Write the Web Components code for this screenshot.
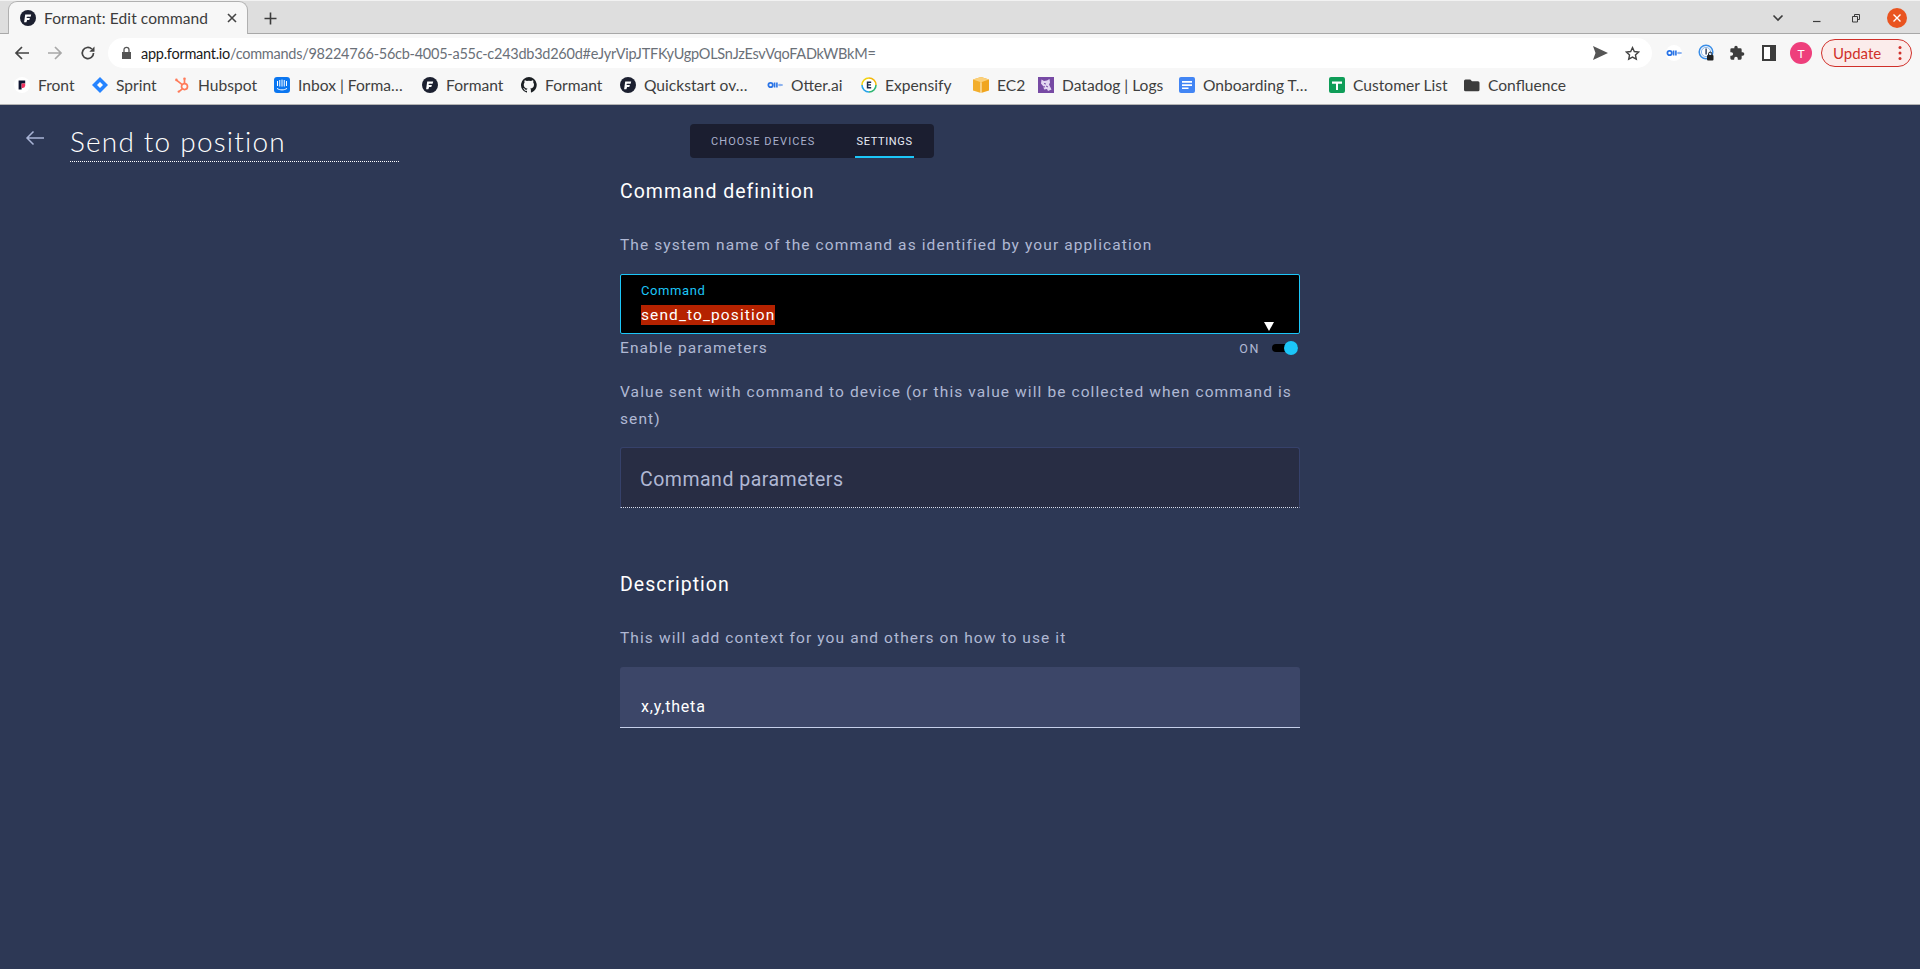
<!DOCTYPE html>
<html>
<head>
<style>
html, body { margin: 0; height: 100%; }
body { background-color: #2d3855; overflow: hidden; display: flex; flex-direction: column; height: 969px; }
form-section.desc { margin-top: 65px; }
</style>
</head>
<body>
<browser-tabs></browser-tabs>
<browser-toolbar></browser-toolbar>
<browser-bookmarks>
  <book-mark icon="front" style="--w:38px">Front</book-mark>
  <book-mark icon="sprint" style="--w:42px">Sprint</book-mark>
  <book-mark icon="hubspot" style="--w:60px">Hubspot</book-mark>
  <book-mark icon="inbox" style="--w:108px">Inbox | Forma…</book-mark>
  <book-mark icon="formant" style="--w:59px">Formant</book-mark>
  <book-mark icon="github" style="--w:59px">Formant</book-mark>
  <book-mark icon="formant" style="--w:107px">Quickstart ov…</book-mark>
  <book-mark icon="otter" style="--w:54px">Otter.ai</book-mark>
  <book-mark icon="expensify" style="--w:72px">Expensify</book-mark>
  <book-mark icon="ec2" style="--w:25px">EC2</book-mark>
  <book-mark icon="datadog" style="--w:101px">Datadog | Logs</book-mark>
  <book-mark icon="docs" style="--w:110px">Onboarding T…</book-mark>
  <book-mark icon="sheets" style="--w:95px">Customer List</book-mark>
  <book-mark icon="folder" style="--w:78px">Confluence</book-mark>
</browser-bookmarks>
<command-page>
  <page-header slot="header" title-text="Send to position"></page-header>
  <form-section heading="Command definition" hint="The system name of the command as identified by your application">
    <command-select label="Command" value="send_to_position"></command-select>
    <param-toggle label="Enable parameters"></param-toggle>
  </form-section>
  <params-block hint="Value sent with command to device (or this value will be collected when command is sent)" label="Command parameters"></params-block>
  <form-section class="desc" heading="Description" hint="This will add context for you and others on how to use it">
    <text-field value="x,y,theta"></text-field>
  </form-section>
</command-page>

<script>
  const UI_FONT = "Lato, 'Noto Sans', sans-serif";
  const APP_FONT = "Roboto, 'Liberation Sans', sans-serif";
  const CYAN = '#1cc6f8';

  const FORMANT_SVG = `<svg viewBox="0 0 16 16" width="16" height="16"><circle cx="8" cy="8" r="8" fill="#1c2030"/><path d="M5.2 4.6h6l-.6 2.1H8.1l-.4 1.4h2.2l-.6 2H7.1L6.4 12.3H4.1z" fill="#fff"/><path d="M6.9 6.7h1.5L7.9 8.1H6.5z" fill="#1c2030"/></svg>`;

  const ICONS = {
    front: `<svg viewBox="0 0 16 16" width="16" height="16"><circle cx="8" cy="8" r="8" fill="#fff"/><path d="M4.6 3.4h6.6v3H7.6v6.2h-3z" fill="#0d1330"/><path d="M7.6 6.4h3.6v2.2a2.4 2.4 0 0 1-2.4 2.4H7.6z" fill="#f2335f"/></svg>`,
    sprint: `<svg viewBox="0 0 16 16" width="16" height="16"><path d="M8 0l8 8-8 8-8-8z" fill="#2684ff"/><path d="M8 5l3 3-3 3-3-3z" fill="#fff"/></svg>`,
    hubspot: `<svg viewBox="0 0 16 16" width="16" height="16" fill="none" stroke="#ff7a59" stroke-width="1.7"><circle cx="10.5" cy="9.6" r="3"/><path d="M10.5 6.5V2.6M8.2 7.6 2.8 3.4M8.3 11.8l-3 2.6"/><circle cx="2.4" cy="2.9" r="1.3" fill="#ff7a59" stroke="none"/><circle cx="10.5" cy="1.8" r="1.3" fill="#ff7a59" stroke="none"/><circle cx="4.8" cy="14.6" r="1.2" fill="#ff7a59" stroke="none"/></svg>`,
    inbox: `<svg viewBox="0 0 16 16" width="16" height="16"><rect width="16" height="16" rx="3" fill="#0b76f0"/><path d="M3.5 4v5M5.75 3v6.500M8 2.600v7M10.250 3v6.500M12.500 4v5" stroke="#fff" stroke-width="1"/><path d="M3 11.400c3 2 7 2 10 0" stroke="#fff" stroke-width="1" fill="none"/></svg>`,
    formant: FORMANT_SVG,
    github: `<svg viewBox="0 0 16 16" width="16" height="16"><path fill="#1b1f23" d="M8 0a8 8 0 0 0-2.5 15.6c.4.1.5-.2.5-.4v-1.4c-2.2.5-2.7-1-2.7-1-.4-.9-.9-1.2-.9-1.2-.7-.5.1-.5.1-.5.8.1 1.2.8 1.2.8.7 1.2 1.9.9 2.3.7.1-.5.3-.9.5-1.1-1.8-.2-3.7-.9-3.7-4 0-.9.3-1.6.8-2.1-.1-.2-.4-1 .1-2.1 0 0 .7-.2 2.2.8a7.6 7.6 0 0 1 4 0c1.5-1 2.2-.8 2.2-.8.4 1.1.2 1.9.1 2.1.5.6.8 1.3.8 2.1 0 3.1-1.9 3.7-3.7 3.9.3.3.6.8.6 1.5v2.2c0 .2.1.5.6.4A8 8 0 0 0 8 0z"/></svg>`,
    otter: `<svg viewBox="0 0 16 16" width="16" height="16"><circle cx="3.6" cy="8" r="2.2" fill="none" stroke="#2a74e6" stroke-width="1.8"/><path d="M7.6 5.400v5.200M9.900 5.400v5.200" stroke="#2a74e6" stroke-width="1.600"/><path d="M11 8h4M13 6.800v2.400M15 7v2" stroke="#6a9cec" stroke-width="1"/></svg>`,
    expensify: `<svg viewBox="0 0 16 16" width="16" height="16" fill="none"><circle cx="8" cy="8" r="7.500" fill="#fff"/><path d="M8 1a7 7 0 0 1 7 7" stroke="#f2b70c" stroke-width="1.600"/><path d="M15 8a7 7 0 0 1-7 7" stroke="#2fb673" stroke-width="1.600"/><path d="M8 15A7 7 0 0 1 1 8" stroke="#27a4e8" stroke-width="1.600"/><path d="M1 8a7 7 0 0 1 7-7" stroke="#f2d20c" stroke-width="1.600"/><path d="M5.800 4.600h4.400v1.300H7.300v1.400H10v1.300H7.300v1.500h2.900v1.300H5.800z" fill="#1c2a4a"/></svg>`,
    ec2: `<svg viewBox="0 0 16 16" width="16" height="16"><path d="M8 0 0 2.600v10.800L8 16z" fill="#f3ae2c"/><path d="M8 0l8 2.600v10.800L8 16z" fill="#f0a51f"/><path d="M0 2.600 8 5.200l8-2.600L8 0z" fill="#fbd07a"/><path d="M7.500 5.200h1V16h-1z" fill="#fff5dd"/></svg>`,
    datadog: `<svg viewBox="0 0 16 16" width="16" height="16"><rect width="16" height="16" fill="#774aa4"/><path d="M3.500 2.500l2.500 1.500 3-.5 2.500-1.500.5 3.500-1 2 2.500 5-3.500 1.500-1-2-3 .5-.5-3-2.500-3z" fill="#e3d6f2"/><path d="M6 6.500l2 .5M8 9l2 1M5.500 9.500l1.500.5" stroke="#774aa4" stroke-width="1"/></svg>`,
    docs: `<svg viewBox="0 0 16 16" width="16" height="16"><rect x="0" width="16" height="16" rx="2" fill="#4285f4"/><path d="M3 4h10v1.700H3zM3 7.200h10v1.700H3zM3 10.400h6.500v1.700H3z" fill="#fff"/></svg>`,
    sheets: `<svg viewBox="0 0 16 16" width="16" height="16"><rect width="16" height="16" rx="2" fill="#0f9d58"/><path d="M3 4.500h10v2.200H9v6.300H7V6.700H3z" fill="#fff"/></svg>`,
    folder: `<svg viewBox="0 0 16 16" width="16" height="16"><path d="M1.500 2.500h4.800l1.700 1.700h6a1.500 1.500 0 0 1 1.500 1.500v7a1.500 1.500 0 0 1-1.500 1.500h-12.500A1.500 1.500 0 0 1 0 12.700v-8.700a1.500 1.500 0 0 1 1.500-1.500z" fill="#3c3c3c"/></svg>`
  };

  class BrowserTabs extends HTMLElement {
    constructor() {
      super();
      this.attachShadow({ mode: 'open' });
      this.shadowRoot.innerHTML = `
        <style>
          :host { display: flex; align-items: flex-end; height: 34px; box-sizing: border-box; padding: 1px 0 0 8px; background: #dedede; border-top: 1px solid #f2f2f2; border-bottom: 1px solid #a8a8a8; font-family: ${UI_FONT}; position: relative; }
          .tab { width: 240px; height: 33px; margin-bottom: -1px; box-sizing: border-box; background: #f7f7f7; border: 1px solid #b0b0b0; border-bottom: 0; border-radius: 9px 9px 0 0; display: flex; align-items: center; padding: 0 9px 0 11px; color: #3c3c3c; font-size: 15.5px; letter-spacing: .1px; }
          .title { margin-left: 8px; flex: 1; }
          .close { width: 12px; height: 12px; }
          .plus { margin: 0 0 7px 15px; width: 15px; height: 15px; }
          .end { margin-left: auto; display: flex; align-items: center; height: 100%; padding-right: 13px; }
          .end svg { display: block; }
          .win-close { width: 20px; height: 20px; border-radius: 50%; background: #e95420; margin-left: 26px; display: flex; align-items: center; justify-content: center; }
        </style>
        <div class="tab">
          ${FORMANT_SVG}
          <span class="title">Formant: Edit command</span>
          <svg class="close" viewBox="0 0 12 12"><path d="M2 2l8 8M10 2l-8 8" stroke="#444" stroke-width="1.6"/></svg>
        </div>
        <svg class="plus" viewBox="0 0 15 15"><path d="M7.5 1.5v12M1.500 7.500h12" stroke="#3c3c3c" stroke-width="1.6"/></svg>
        <div class="end">
          <svg width="12" height="8" viewBox="0 0 12 8"><path d="M1.500 1.500 6 6l4.500-4.500" fill="none" stroke="#3c3c3c" stroke-width="1.6"/></svg>
          <svg width="10" height="10" viewBox="0 0 10 10" style="margin-left:28px"><path d="M1 8.500h7.500" stroke="#3c3c3c" stroke-width="1.2"/></svg>
          <svg width="10" height="10" viewBox="0 0 10 10" style="margin-left:29px"><path d="M1.500 3.500h5v5.500h-5zM3.500 3.500v-2h5v5h-2" fill="none" stroke="#3c3c3c" stroke-width="1"/></svg>
          <div class="win-close"><svg width="10" height="10" viewBox="0 0 10 10"><path d="M1.500 1.500l7 7M8.500 1.500l-7 7" stroke="#fff" stroke-width="1.4"/></svg></div>
        </div>`;
    }
  }

  class BrowserToolbar extends HTMLElement {
    constructor() {
      super();
      this.attachShadow({ mode: 'open' });
      this.shadowRoot.innerHTML = `
        <style>
          :host { display: flex; align-items: center; height: 35px; box-sizing: border-box; padding-top: 3px; background: #f7f7f7; font-family: ${UI_FONT}; color: #444; }
          svg { display: block; flex: none; }
          .nav { display: flex; align-items: center; gap: 17px; padding-left: 14px; width: 108px; box-sizing: border-box; }
          .omni { width: 1544px; height: 30px; background: #fff; border-radius: 15px; display: flex; align-items: center; box-sizing: border-box; padding: 0 12px 0 13px; font-size: 14.5px; letter-spacing: -.26px; flex: none; }
          .url { margin-left: 9px; flex: 1; color: #6a7078; white-space: nowrap; }
          .url b { font-weight: 400; color: #1a1a1a; }
          .exts { display: flex; align-items: center; }
          .update { margin-left: 9px; width: 91px; height: 28px; box-sizing: border-box; border: 1px solid #d0302a; border-radius: 14px; background: #fbeceb; color: #d0302a; font-size: 15px; display: flex; align-items: center; padding: 0 9px 0 11px; justify-content: space-between; }
          .avatar { width: 22px; height: 22px; border-radius: 50%; background: #ee3f7c; color: #fff; font-size: 12px; display: flex; align-items: center; justify-content: center; }
        </style>
        <div class="nav">
          <svg width="16" height="16" viewBox="0 0 16 16"><path d="M15 8H2M8 2 2 8l6 6" fill="none" stroke="#444" stroke-width="1.7"/></svg>
          <svg width="16" height="16" viewBox="0 0 16 16"><path d="M1 8h13M8 2l6 6-6 6" fill="none" stroke="#a8a8a8" stroke-width="1.7"/></svg>
          <svg width="16" height="16" viewBox="0 0 16 16"><path d="M13.500 8a5.600 5.600 0 1 1-1.700-4" fill="none" stroke="#444" stroke-width="1.7"/><path d="M14.500 1.500v5.200H9.300z" fill="#444"/></svg>
        </div>
        <div class="omni">
          <svg width="11" height="14" viewBox="0 0 11 14"><path d="M1 6h9v7H1z" fill="#555"/><path d="M3 6V3.800a2.500 2.500 0 0 1 5 0V6" fill="none" stroke="#555" stroke-width="1.3"/></svg>
          <span class="url"><b>app.formant.io</b>/commands/98224766-56cb-4005-a55c-c243db3d260d#eJyrVipJTFKyUgpOLSnJzEsvVqoFADkWBkM=</span>
          <svg width="15" height="14" viewBox="0 0 15 14" style="margin-right:17px"><path d="M0 0l15 7-15 7 2.500-7z" fill="#555"/></svg>
          <svg width="15" height="15" viewBox="0 0 24 24"><path d="M12 2.500l2.900 6.300 6.900.8-5.100 4.700 1.400 6.800L12 17.700l-6.100 3.400 1.400-6.800L2.200 9.600l6.900-.8z" fill="none" stroke="#444" stroke-width="2.2"/></svg>
        </div>
        <div class="exts">
          <div style="width:16px;height:16px;background:#fff;border-radius:50%;margin-left:14px">${ICONS.otter}</div>
          <svg width="16" height="18" viewBox="0 0 16 18" style="margin-left:16px"><circle cx="8" cy="8" r="6.800" fill="none" stroke="#3a8ee8" stroke-width="1.500"/><circle cx="8" cy="8" r="4.600" fill="#fff" stroke="#8ab8ee" stroke-width="1"/><path d="M7.400 4.500h1.400v6H7.400z" fill="#2a3a5a"/><rect x="9" y="11" width="6.500" height="5.500" rx="1" fill="#222"/><path d="M10.500 11V9.800a1.700 1.700 0 0 1 3.400 0V11" fill="none" stroke="#222" stroke-width="1"/></svg>
          <svg width="16" height="16" viewBox="0 0 24 24" style="margin-left:15px"><path d="M20.500 11H19V7a2 2 0 0 0-2-2h-4V3.500a2.500 2.500 0 0 0-5 0V5H4a2 2 0 0 0-2 2v3.800h1.500a2.700 2.700 0 0 1 0 5.400H2V20a2 2 0 0 0 2 2h3.800v-1.500a2.700 2.700 0 0 1 5.400 0V22H17a2 2 0 0 0 2-2v-4h1.500a2.500 2.500 0 0 0 0-5z" fill="#3c3c3c"/></svg>
          <svg width="14" height="16" viewBox="0 0 14 16" style="margin-left:17px"><path d="M0 0h14v16H0z" fill="#3c3c3c"/><path d="M2 2h6v12H2z" fill="#fff"/></svg>
          <div class="avatar" style="margin-left:14px">T</div>
          <div class="update"><span>Update</span><svg width="4" height="16" viewBox="0 0 4 16"><circle cx="2" cy="2.500" r="1.500" fill="#d0302a"/><circle cx="2" cy="8" r="1.500" fill="#d0302a"/><circle cx="2" cy="13.500" r="1.500" fill="#d0302a"/></svg></div>
        </div>`;
    }
  }

  class BrowserBookmarks extends HTMLElement {
    constructor() {
      super();
      this.attachShadow({ mode: 'open' });
      this.shadowRoot.innerHTML = `
        <style>
          :host { display: flex; align-items: center; gap: 16px; height: 36px; box-sizing: border-box; padding: 0 0 3px 14px; background: #f7f7f7; border-bottom: 1px solid #b4b4b4; }
        </style>
        <slot></slot>`;
    }
  }

  class BookMark extends HTMLElement {
    constructor() {
      super();
      this.attachShadow({ mode: 'open' });
    }
    connectedCallback() {
      this.shadowRoot.innerHTML = `
        <style>
          :host { display: flex; align-items: center; gap: 8px; font-family: ${UI_FONT}; font-size: 15.6px; color: #3f3f3f; white-space: nowrap; }
          svg { display: block; }
          .t { width: var(--w); display: block; }
        </style>
        ${ICONS[this.getAttribute('icon')]}
        <span class="t"><slot></slot></span>`;
    }
  }

  class CommandPage extends HTMLElement {
    constructor() {
      super();
      this.attachShadow({ mode: 'open' });
      this.shadowRoot.innerHTML = `
        <style>
          :host { display: block; flex: 1; background: #2d3855; font-family: ${APP_FONT}; position: relative; }
          .col { width: 680px; margin: 0 auto; display: flex; flex-direction: column; }
        </style>
        <slot name="header"></slot>
        <div class="col"><slot></slot></div>`;
    }
  }

  class PageHeader extends HTMLElement {
    constructor() {
      super();
      this.attachShadow({ mode: 'open' });
    }
    connectedCallback() {
      this.shadowRoot.innerHTML = `
        <style>
          :host { display: flex; align-items: flex-start; height: 75px; box-sizing: border-box; padding: 19px 0 0 25px; }
          svg { display: block; margin-top: 6px; }
          .title { margin-left: 25px; width: 329px; height: 38px; box-sizing: border-box; padding-top: 1px; border-bottom: 1px dotted #fff; color: #fff; font-family: Lato, sans-serif; font-size: 28px; font-weight: 300; letter-spacing: 1.2px; line-height: 32px; white-space: nowrap; }
          .tabs { margin-left: 291px; height: 34px; display: flex; background: #1b1e30; border-radius: 4px; padding: 0 21px; gap: 41px; font-size: 11px; letter-spacing: 1.1px; color: #a9b0cc; align-items: center; }
          .tab { height: 100%; display: flex; align-items: center; box-sizing: border-box; position: relative; }
          .active { color: #e8ebf5; letter-spacing: .65px; }
          .active::after { content: ''; position: absolute; left: -1px; right: -1px; bottom: 0; height: 2px; background: ${CYAN}; }
        </style>
        <svg width="20" height="16" viewBox="0 0 20 16"><path d="M19 8H2M8.500 1.500 2 8l6.500 6.500" fill="none" stroke="#a9b4d6" stroke-width="1.5"/></svg>
        <div class="title">${this.getAttribute('title-text')}</div>
        <div class="tabs"><div class="tab">CHOOSE DEVICES</div><div class="tab active">SETTINGS</div></div>`;
    }
  }

  class FormSection extends HTMLElement {
    constructor() {
      super();
      this.attachShadow({ mode: 'open' });
    }
    connectedCallback() {
      this.shadowRoot.innerHTML = `
        <style>
          :host { display: block; }
          h2 { margin: 0; font-size: 19.5px; font-weight: 400; letter-spacing: 1px; color: #fff; line-height: 24px; }
          p { margin: 28px 0 0; font-size: 15.5px; letter-spacing: 1.1px; color: #b0b8d4; line-height: 27px; }
          .body { margin-top: 15px; }
        </style>
        <h2>${this.getAttribute('heading')}</h2>
        <p>${this.getAttribute('hint')}</p>
        <div class="body"><slot></slot></div>`;
    }
  }

  class CommandSelect extends HTMLElement {
    constructor() {
      super();
      this.attachShadow({ mode: 'open' });
    }
    connectedCallback() {
      this.shadowRoot.innerHTML = `
        <style>
          :host { display: block; height: 60px; box-sizing: border-box; background: #000; border: 1px solid ${CYAN}; border-radius: 2px; padding: 8px 0 0 20px; position: relative; }
          .label { color: ${CYAN}; font-size: 13px; letter-spacing: .6px; line-height: 16px; }
          .value { display: inline-block; margin-top: 6px; background: #b52200; color: #fff; font-size: 15.5px; letter-spacing: 1.1px; line-height: 20px; }
          svg { position: absolute; right: 25px; bottom: 2px; }
        </style>
        <div class="label">${this.getAttribute('label')}</div>
        <div class="value">${this.getAttribute('value')}</div>
        <svg width="10" height="9" viewBox="0 0 10 9"><path d="M0 0h10L5 9z" fill="#fff"/></svg>`;
    }
  }

  class ParamToggle extends HTMLElement {
    constructor() {
      super();
      this.attachShadow({ mode: 'open' });
    }
    connectedCallback() {
      this.shadowRoot.innerHTML = `
        <style>
          :host { display: flex; align-items: center; height: 28px; margin-top: 0; color: #b0b8d4; font-size: 15.5px; letter-spacing: 1.1px; }
          .on { margin-left: auto; font-size: 12.5px; letter-spacing: 1.6px; margin-right: 12px; }
          .track { width: 26px; height: 8px; background: #000; border-radius: 4px; position: relative; margin-right: 2px; }
          .knob { position: absolute; right: 0; top: -3px; width: 14px; height: 14px; border-radius: 50%; background: ${CYAN}; }
        </style>
        <span>${this.getAttribute('label')}</span>
        <span class="on">ON</span>
        <div class="track"><div class="knob"></div></div>`;
    }
  }

  class ParamsBlock extends HTMLElement {
    constructor() {
      super();
      this.attachShadow({ mode: 'open' });
    }
    connectedCallback() {
      this.shadowRoot.innerHTML = `
        <style>
          :host { display: block; margin-top: 17px; }
          p { margin: 0; font-size: 15.5px; letter-spacing: 1.1px; color: #b0b8d4; line-height: 27px; }
          .box { margin-top: 14px; height: 61px; box-sizing: border-box; background: #282d44; border: 1px solid #36416a; border-bottom: 1px dotted #d8def0; border-radius: 3px 3px 0 0; padding: 3px 0 0 19px; display: flex; align-items: center; font-size: 19.5px; letter-spacing: .5px; color: #b0b8d4; }
        </style>
        <p>${this.getAttribute('hint')}</p>
        <div class="box">${this.getAttribute('label')}</div>`;
    }
  }

  class TextField extends HTMLElement {
    constructor() {
      super();
      this.attachShadow({ mode: 'open' });
    }
    connectedCallback() {
      this.shadowRoot.innerHTML = `
        <style>
          :host { display: flex; align-items: flex-end; height: 61px; box-sizing: border-box; background: #3c4668; border-bottom: 1px solid #c6cfea; border-radius: 3px 3px 0 0; padding: 0 0 11px 21px; color: #fff; font-size: 16px; letter-spacing: .8px; line-height: 18px; }
        </style>
        ${this.getAttribute('value')}`;
    }
  }

  customElements.define('browser-tabs', BrowserTabs);
  customElements.define('browser-toolbar', BrowserToolbar);
  customElements.define('browser-bookmarks', BrowserBookmarks);
  customElements.define('book-mark', BookMark);
  customElements.define('command-page', CommandPage);
  customElements.define('page-header', PageHeader);
  customElements.define('form-section', FormSection);
  customElements.define('command-select', CommandSelect);
  customElements.define('param-toggle', ParamToggle);
  customElements.define('params-block', ParamsBlock);
  customElements.define('text-field', TextField);
</script>
</body>
</html>
